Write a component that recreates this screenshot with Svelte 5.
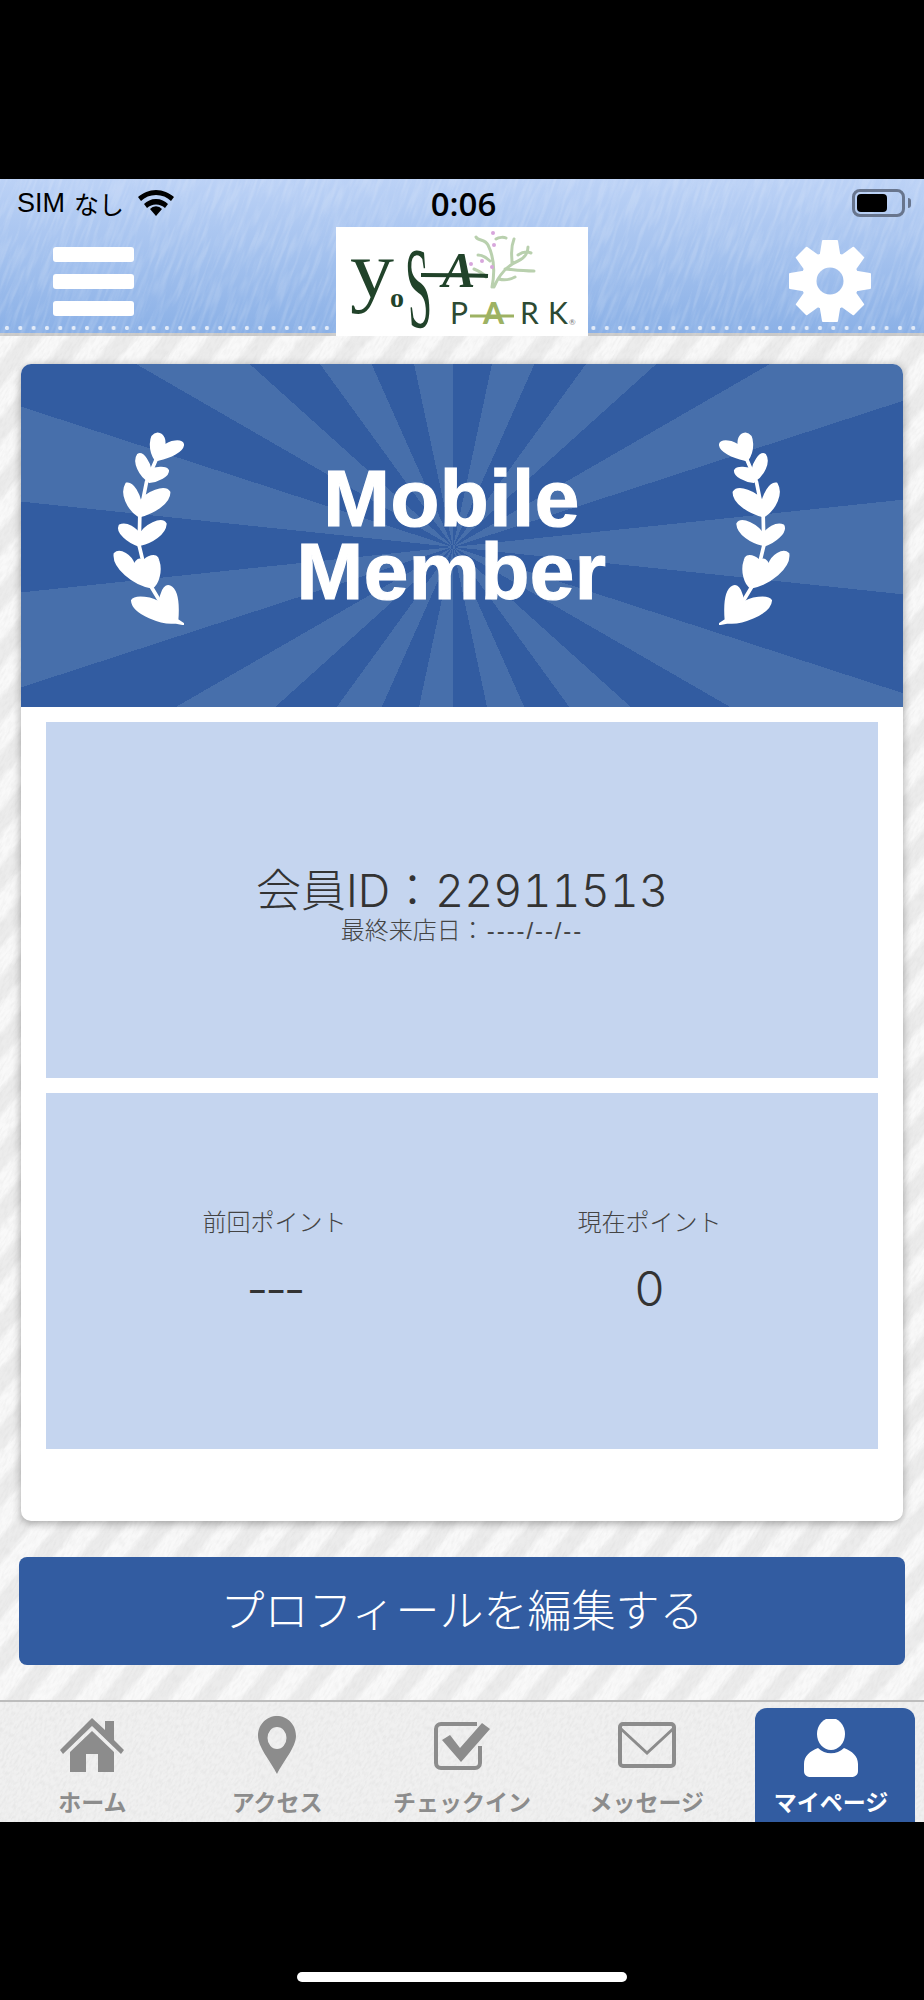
<script>
  const tabs = [
    { label: 'ホーム', icon: 'home' },
    { label: 'アクセス', icon: 'pin' },
    { label: 'チェックイン', icon: 'check' },
    { label: 'メッセージ', icon: 'mail' },
    { label: 'マイページ', icon: 'user', active: true }
  ];
  const laurel = [
    'M197 118C178 90 178 42 203 40C222 42 226 62 222 78C240 62 275 58 279 72C280 92 240 110 205 118Z',
    'M178 182C150 165 130 125 145 103C160 95 180 130 182 150C195 142 228 138 234 150C236 165 205 182 178 184Z',
    'M145 285C115 265 92 220 110 190C130 185 148 225 152 245C170 215 225 195 238 215C240 245 195 275 150 287Z',
    'M148 375C115 365 80 335 90 315C110 305 140 325 150 345C165 315 215 290 227 310C225 340 185 365 152 372Z',
    'M185 500C130 490 70 440 75 400C90 385 125 405 133 435C140 420 150 410 160 425C170 410 200 395 205 420C215 450 205 490 185 502Z',
    'M262 598L280 610L255 605C220 610 130 580 127 540C135 525 190 530 212 550C210 520 225 490 240 498C265 510 265 560 262 598Z'
  ];
</script>

{#snippet wreath(flip)}
  <svg class="wreath" class:flip viewBox="70 35 212 578" aria-hidden="true">
    {#each laurel as d}
      <path {d} fill="#fff" stroke="#fff" stroke-width="7" stroke-linejoin="round" />
    {/each}
    <path d="M200 115L170 185L150 285L148 375L160 425M185 500L215 550" fill="none" stroke="#fff" stroke-width="11" />
  </svg>
{/snippet}

{#snippet grain(id, freq, angle, color, opacity)}
  <svg class="grain" style="opacity: {opacity}; transform: rotate({angle}deg)" aria-hidden="true">
    <filter {id} x="0" y="0" width="100%" height="100%">
      <feTurbulence type="fractalNoise" baseFrequency={freq} numOctaves="2" seed="4" />
      <feColorMatrix values="0 0 0 0 {color} 0 0 0 0 {color} 0 0 0 0 {color} 3 0 0 0 -1.2" />
    </filter>
    <rect width="100%" height="100%" filter="url(#{id})" />
  </svg>
{/snippet}

<div class="screen">
  <header class="header">
    {@render grain('g1', '0.25 0.03', 20, 1, 0.14)}
    <div class="status">
      <div class="carrier">
        <span class="sim">SIM</span><span class="nashi">なし</span>
        <svg class="wifi" viewBox="0 0 36 26" aria-hidden="true">
          <path d="M18 26l-6-7a8 8 0 0 1 12 0z" />
          <path d="M18 9c5 0 9 2 12 5l-3 4a13 13 0 0 0-18 0l-3-4c3-3 7-5 12-5z" />
          <path d="M18 0c7 0 13 3 18 7l-3 4C29 7 24 5 18 5S7 7 3 11L0 7c5-4 11-7 18-7z" />
        </svg>
      </div>
      <div class="time">0:06</div>
      <div class="battery"><span class="fill"></span><span class="nub"></span></div>
    </div>
    <div class="nav">
      <button class="menu" aria-label="メニュー"><span></span><span></span><span></span></button>
      <div class="logo">
        <svg viewBox="0 0 252 109" aria-label="YOSA PARK">
          <g fill="none" stroke="#b9d0ae" stroke-width="3" stroke-linecap="round">
            <path d="M156 60c3-15 3-28-4-42-3-6-10-4-12-8M154 34c-4-4-8-6-12-6M150 50c-3-4-7-6-12-8M158 60c5-12 14-22 24-26 8-3 10-10 10-14M169 42c4 0 14 2 29 2M176 36c0-8-2-14 2-24M163 52c6 2 12 0 16-2M182 28c3-2 8-4 13-2M160 12c3-2 8-2 10-1" />
          </g>
          <g fill="#d7a6dc">
            <circle cx="157" cy="6" r="2" /><circle cx="158" cy="18" r="2" /><circle cx="135" cy="37" r="2" /><circle cx="146" cy="34" r="2" /><circle cx="156" cy="40" r="2" />
          </g>
          <g fill="#21432a" font-family="'Liberation Serif', serif">
            <text transform="translate(14 70) scale(1.1 1)" font-size="80">y</text>
            <text x="54" y="80" font-size="28" font-weight="700">o</text>
            <text transform="translate(73 101) rotate(-4) scale(1.1 2.9)" font-size="40">S</text>
            <text x="106" y="60" font-size="50" font-weight="700" font-style="italic">A</text>
          </g>
          <path d="M85 48c20 0 50 0 67 1" stroke="#21432a" stroke-width="4" fill="none" />
          <g font-family="Lato, sans-serif" font-size="30" fill="#2c4a33">
            <text x="114" y="97">P</text>
            <text x="184" y="97">R</text>
            <text x="212" y="97">K</text>
            <text x="147" y="97" font-weight="900" fill="#9db263">A</text>
            <text x="233" y="98" font-size="8" fill="#777">®</text>
          </g>
          <path d="M134 89h44" stroke="#9db263" stroke-width="3" />
        </svg>
      </div>
      <button class="gear" aria-label="設定">
        <svg viewBox="0 0 82 82" aria-hidden="true">
          <mask id="gear-hole">
            <rect width="82" height="82" fill="#fff" />
            <circle cx="41" cy="41" r="13.5" fill="#000" />
          </mask>
          <g fill="#fff" mask="url(#gear-hole)">
            <circle cx="41" cy="41" r="29" />
            {#each [0, 45, 90, 135, 180, 225, 270, 315] as a}
              <path d="M33 1q0-1 1-1h14q1 0 1 1l3 18H30z" transform="rotate({a} 41 41)" />
            {/each}
          </g>
        </svg>
      </button>
    </div>
  </header>

  <main class="page">
    {@render grain('g2', '0.5 0.12', 30, 0.55, 0.13)}
    <section class="card">
      <div class="banner">
        {@render wreath(false)}
        <h1>Mobile<br />Member</h1>
        {@render wreath(true)}
      </div>
      <div class="panel id">
        <div class="member">会員ID：22911513</div>
        <div class="visit">最終来店日：<span class="dashes">----/--/--</span></div>
      </div>
      <div class="panel points">
        <div class="point"><div class="cap">前回ポイント</div><div class="num dash">---</div></div>
        <div class="point"><div class="cap">現在ポイント</div><div class="num">0</div></div>
      </div>
    </section>
    <button class="edit">プロフィールを編集する</button>
  </main>

  <nav class="tabs">
    {@render grain('g3', '0.45 0.2', 30, 0.6, 0.2)}
    {#each tabs as tab}
      <div class="tab" class:active={tab.active}>
        <div class="icon">
          {#if tab.icon === 'home'}
            <svg width="64" height="54" viewBox="0 0 64 54"><path fill="currentColor" d="M32 0l13 12V3h9v19l10 10-3 4L32 8 3 36l-3-4z" /><path fill="currentColor" d="M32 13l22 21v20H38V36H26v18H10V34z" /></svg>
          {:else if tab.icon === 'pin'}
            <svg width="38" height="58" viewBox="0 0 38 58"><path fill="currentColor" fill-rule="evenodd" d="M19 0c10 0 19 8 19 20 0 11-13 26-19 38C13 46 0 31 0 20 0 8 9 0 19 0zm0 11a9.500 11 0 1 0 0 22 9.500 11 0 0 0 0-22z" /></svg>
          {:else if tab.icon === 'check'}
            <svg width="58" height="50" viewBox="0 0 58 50"><path fill="none" stroke="currentColor" stroke-width="4" d="M44 4H8a5 5 0 0 0-5 5v34a5 5 0 0 0 5 5h34a5 5 0 0 0 5-5V26" /><path fill="currentColor" d="M9 20l8-5 10 13L49 3l8 6-29 33z" /></svg>
          {:else if tab.icon === 'mail'}
            <svg width="58" height="46" viewBox="0 0 58 46"><rect x="2" y="2" width="54" height="42" rx="3" fill="none" stroke="currentColor" stroke-width="4" /><path d="M2 6l27 25L56 6" fill="none" stroke="currentColor" stroke-width="3" /></svg>
          {:else}
            <svg width="54" height="58" viewBox="0 0 54 58"><ellipse cx="27" cy="15" rx="14" ry="16" fill="currentColor" /><path fill="currentColor" d="M14 29c7 7 19 7 26 0 8 3 14 8 14 16v7c0 4-3 6-7 6H7c-4 0-7-2-7-6v-7c0-8 6-13 14-16z" /></svg>
          {/if}
        </div>
        <span>{tab.label}</span>
      </div>
    {/each}
  </nav>

  <div class="bottom"><span class="home-bar"></span></div>
</div>

<style>
  :global(body) {
    margin: 0;
    background: #000;
  }
  .screen {
    width: 924px;
    height: 2000px;
    padding-top: 179px;
    box-sizing: border-box;
    display: flex;
    flex-direction: column;
    background: #000;
    font-family: Inter, 'Noto Sans CJK JP', sans-serif;
    color: #333;
  }
  button {
    border: 0;
    padding: 0;
    background: none;
    font: inherit;
  }
  .grain {
    position: absolute;
    left: -500px;
    top: -900px;
    width: 2000px;
    height: 2000px;
    pointer-events: none;
  }

  .header {
    position: relative;
    flex: none;
    height: 157px;
    box-sizing: border-box;
    display: flex;
    flex-direction: column;
    overflow: hidden;
    background:
      radial-gradient(circle at 2px 2px, #dfe9f8 1.8px, transparent 2.4px) 5px 147px / 13.33px 100% repeat-x,
      linear-gradient(#bcd2f6, #8ab0e6);
    box-shadow: inset 0 -3px 0 #c9c9c9;
  }
  .status {
    position: relative;
    flex: none;
    height: 48px;
    padding: 0 14px 0 17px;
    display: grid;
    grid-template-columns: 1fr auto 1fr;
    align-items: center;
    color: #000;
  }
  .carrier {
    display: flex;
    align-items: center;
    font-family: 'Liberation Sans', 'Noto Sans CJK JP', sans-serif;
  }
  .sim {
    font-size: 27px;
  }
  .nashi {
    font-size: 25px;
    margin-left: 9px;
  }
  .wifi {
    width: 36px;
    height: 26px;
    margin-left: 14px;
  }
  .time {
    font-size: 33px;
    font-family: 'Open Sans', sans-serif;
    font-weight: 600;
  }
  .battery {
    justify-self: end;
    position: relative;
    width: 53px;
    height: 28px;
    box-sizing: border-box;
    border: 3px solid #68758d;
    border-radius: 8px;
    padding: 2px;
    margin-right: 5px;
  }
  .fill {
    display: block;
    width: 30px;
    height: 100%;
    background: #000;
    border-radius: 4px;
  }
  .nub {
    position: absolute;
    right: -9px;
    top: 6px;
    width: 3px;
    height: 10px;
    background: #68758d;
    border-radius: 0 3px 3px 0;
  }
  .nav {
    position: relative;
    flex: none;
    display: grid;
    grid-template-columns: 1fr 252px 1fr;
    grid-template-rows: 106px;
    align-items: center;
  }
  .menu {
    width: 81px;
    margin-left: 53px;
    margin-top: 3px;
    display: flex;
    flex-direction: column;
    gap: 12.5px;
  }
  .menu span {
    display: block;
    height: 14.5px;
    background: #fff;
    border-radius: 3px;
  }
  .logo {
    align-self: start;
    background: #fff;
    height: 109px;
  }
  .logo svg {
    display: block;
    width: 252px;
    height: 109px;
  }
  .gear {
    justify-self: end;
    width: 82px;
    height: 82px;
    margin: 2px 53px 0 0;
  }
  .gear svg {
    display: block;
  }

  .page {
    position: relative;
    flex: none;
    height: 1364px;
    box-sizing: border-box;
    padding: 28px 19px 0;
    overflow: hidden;
    background: repeating-linear-gradient(130deg, #f9f9f9 0 14px, #ececec 19px 31px, #f9f9f9 36px);
  }
  .page .grain {
    top: -300px;
    height: 2400px;
    width: 2400px;
    left: -700px;
  }
  .card {
    position: relative;
    margin: 0 2px;
    height: 1157px;
    background: #fff;
    border-radius: 10px;
    box-shadow: 0 2px 8px rgba(0, 0, 0, 0.35);
    overflow: hidden;
  }
  .banner {
    height: 343px;
    box-sizing: border-box;
    padding: 0 113px 0 92px;
    display: flex;
    align-items: center;
    justify-content: space-between;
    background: repeating-conic-gradient(from 0deg at 432px 183px, #325ca1 0 12deg, #476fab 12deg 24deg);
    color: #fff;
  }
  .wreath {
    width: 71px;
    height: 193px;
    margin-bottom: 14px;
  }
  .wreath.flip {
    transform: scaleX(-1);
  }
  h1 {
    margin: 0 0 2px;
    font-family: 'Liberation Sans', Arial, sans-serif;
    font-size: 80px;
    line-height: 73px;
    letter-spacing: 0.5px;
    font-weight: 700;
    text-align: center;
    -webkit-text-stroke: 1.2px #fff;
  }
  .panel {
    height: 356px;
    margin: 15px 25px 0;
    background: #c5d5ef;
  }
  .id {
    display: flex;
    flex-direction: column;
    align-items: center;
    padding-top: 139px;
    box-sizing: border-box;
  }
  .member {
    font-size: 45px;
    font-weight: 300;
    line-height: 60px;
    font-variant-numeric: tabular-nums;
    white-space: nowrap;
  }
  .visit {
    font-size: 24px;
    line-height: 30px;
    margin-top: -5px;
    color: #444;
    font-weight: 300;
  }
  .dashes {
    font-family: 'Liberation Sans', sans-serif;
    letter-spacing: 1.9px;
    margin-left: 2px;
  }
  .points {
    display: grid;
    grid-template-columns: 1fr 1fr;
    padding: 112px 41px 0;
    box-sizing: border-box;
  }
  .point {
    text-align: center;
  }
  .cap {
    font-size: 24px;
    line-height: 36px;
    color: #444;
    font-weight: 300;
  }
  .num {
    font-size: 48px;
    font-weight: 300;
    line-height: 60px;
    margin-top: 18px;
  }
  .dash {
    letter-spacing: -3px;
  }
  .edit {
    position: relative;
    display: block;
    width: 886px;
    height: 108px;
    margin-top: 36px;
    padding-bottom: 6px;
    background: #325ca1;
    border-radius: 8px;
    color: #fff;
    font-size: 44px;
    font-weight: 300;
  }

  .tabs {
    position: relative;
    flex: none;
    height: 122px;
    box-sizing: border-box;
    display: grid;
    grid-template-columns: repeat(5, 1fr);
    background: #f0f0f0;
    border-top: 2px solid #bdbdbd;
    overflow: hidden;
  }
  .tab {
    position: relative;
    display: flex;
    flex-direction: column;
    align-items: center;
    color: #8c8c8c;
    font-size: 23px;
    font-weight: 700;
  }
  .tab.active {
    margin: 6px 9px 0 16px;
    padding-right: 8px;
    background: #325ca1;
    border-radius: 12px 12px 0 0;
    color: #fff;
  }
  .icon {
    height: 82px;
    display: flex;
    align-items: center;
    justify-content: center;
    padding-top: 4px;
    box-sizing: border-box;
  }
  .tab.active .icon {
    height: 76px;
  }
  .bottom {
    flex: 1;
    display: flex;
    justify-content: center;
    align-items: flex-end;
    padding-bottom: 18px;
  }
  .home-bar {
    width: 330px;
    height: 10px;
    background: #fff;
    border-radius: 5px;
  }
</style>
